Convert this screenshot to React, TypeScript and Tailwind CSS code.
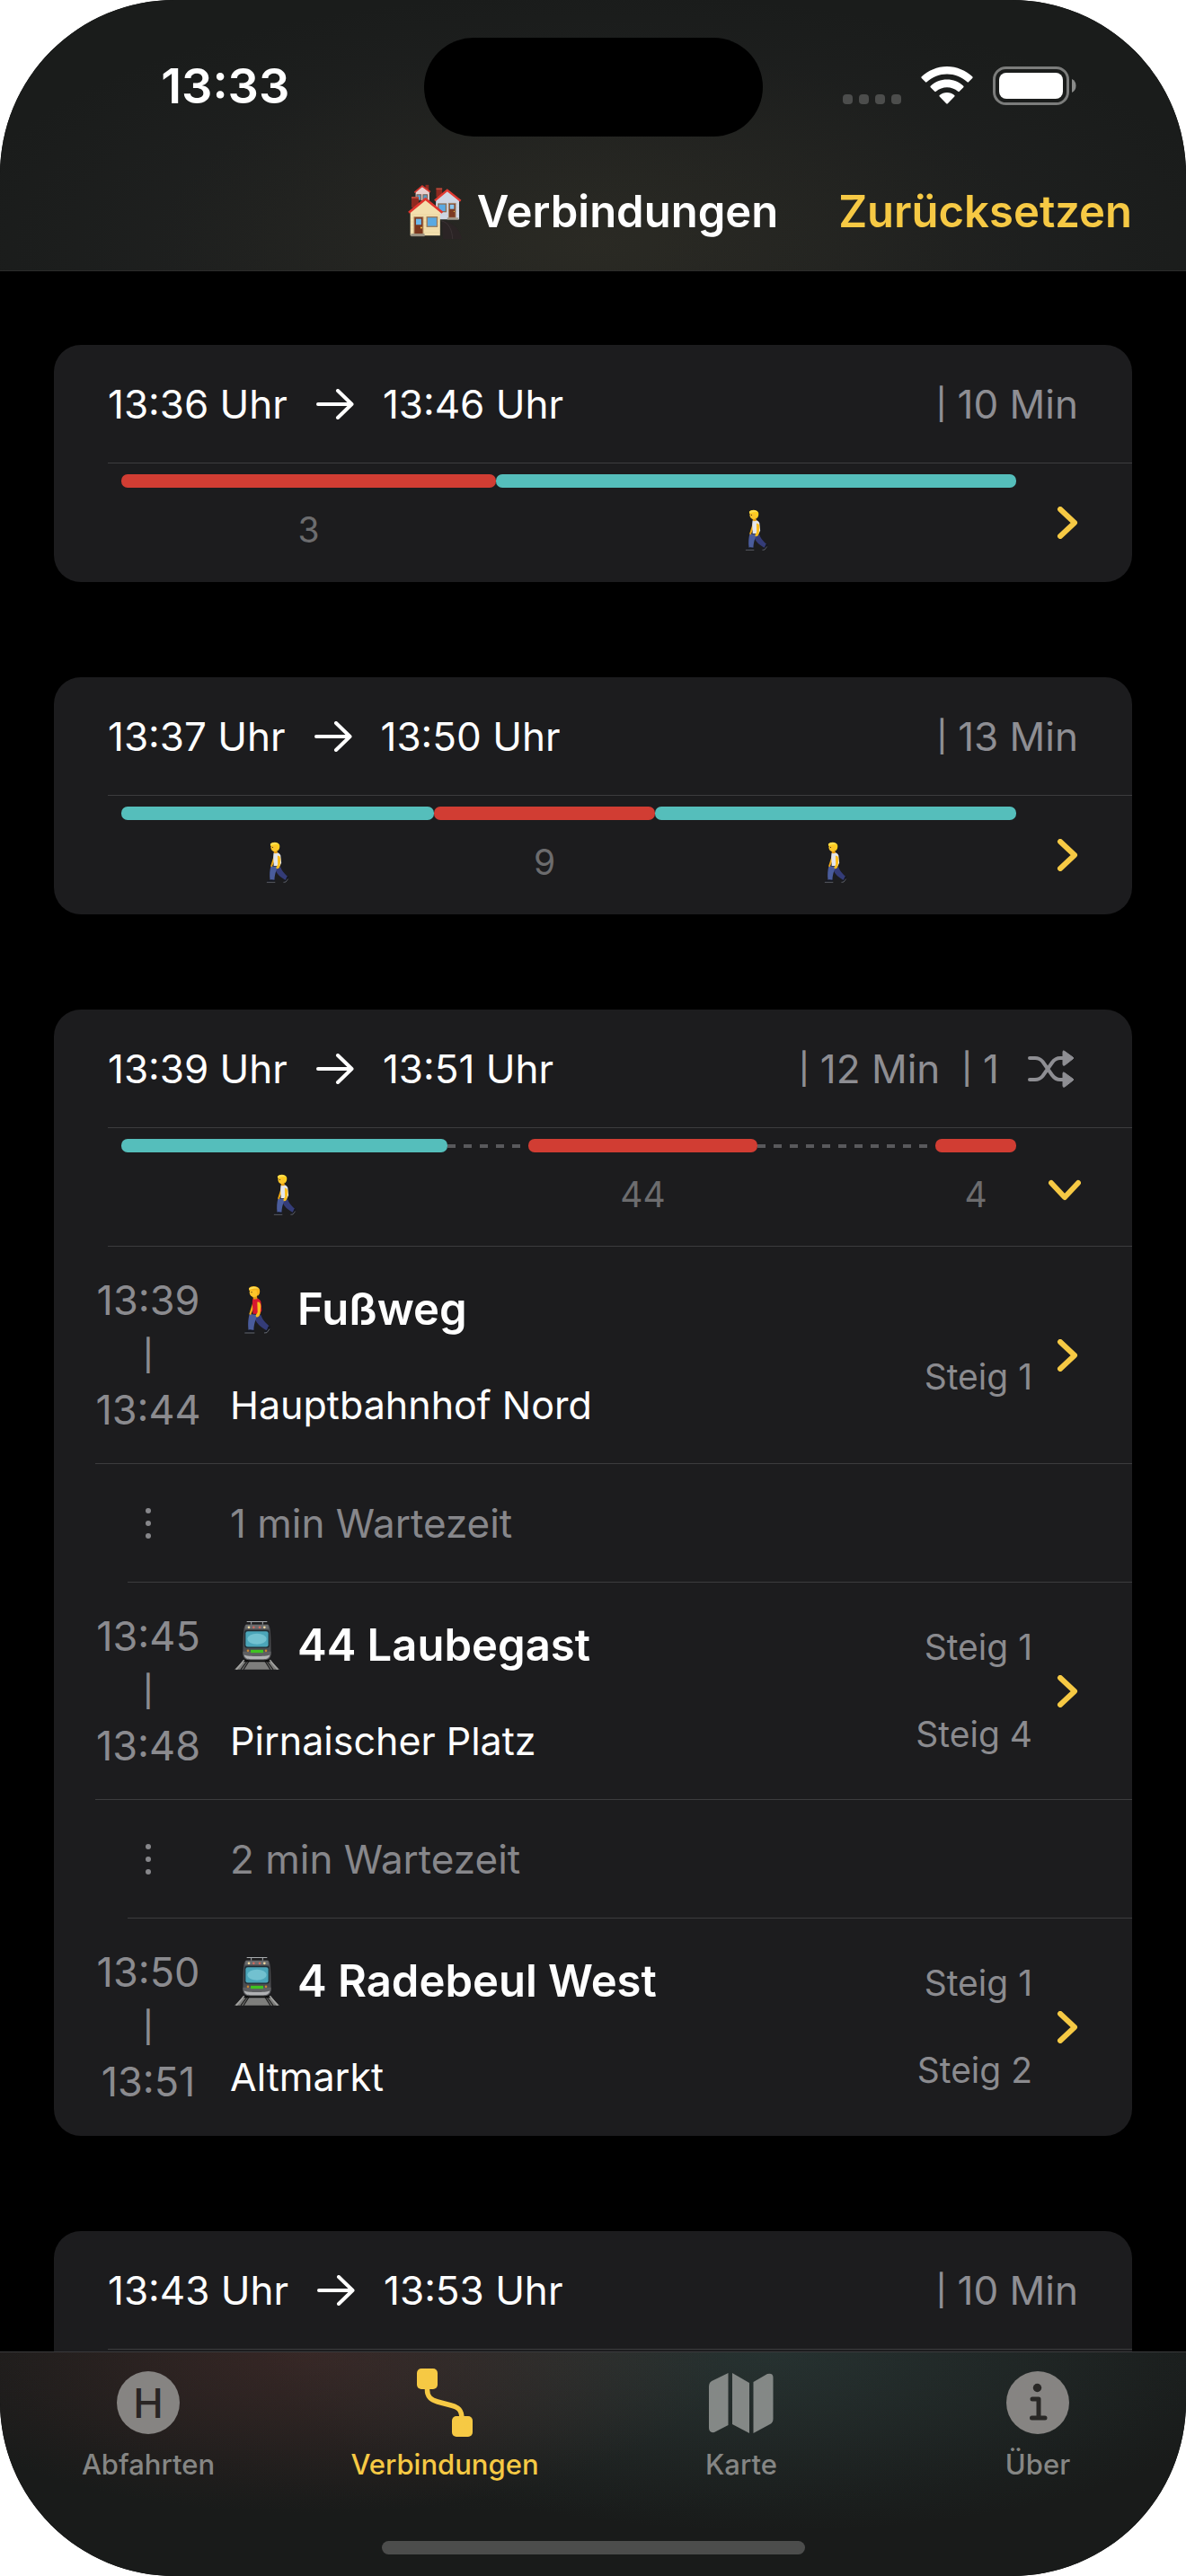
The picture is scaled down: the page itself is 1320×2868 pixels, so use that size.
import type { ReactNode } from "react";

type Segment = { kind: "ride" | "walk" | "wait"; minutes: number; label?: string };

type Leg = {
  kind: "walk" | "tram";
  start: string;
  end: string;
  title: string;
  stop: string;
  platforms: [string, string];
  waitAfter?: string;
};

type Connection = {
  start: string;
  end: string;
  duration: string;
  changes?: number;
  segments: Segment[];
  legs?: Leg[];
};

const connections: Connection[] = [
  {
    start: "13:36",
    end: "13:46",
    duration: "10 Min",
    segments: [
      { kind: "ride", minutes: 417, label: "3" },
      { kind: "walk", minutes: 579 },
    ],
  },
  {
    start: "13:37",
    end: "13:50",
    duration: "13 Min",
    segments: [
      { kind: "walk", minutes: 348 },
      { kind: "ride", minutes: 246, label: "9" },
      { kind: "walk", minutes: 402 },
    ],
  },
  {
    start: "13:39",
    end: "13:51",
    duration: "12 Min",
    changes: 1,
    segments: [
      { kind: "walk", minutes: 363 },
      { kind: "wait", minutes: 90 },
      { kind: "ride", minutes: 255, label: "44" },
      { kind: "wait", minutes: 198 },
      { kind: "ride", minutes: 90, label: "4" },
    ],
    legs: [
      {
        kind: "walk",
        start: "13:39",
        end: "13:44",
        title: "Fußweg",
        stop: "Hauptbahnhof Nord",
        platforms: ["", "Steig 1"],
        waitAfter: "1 min Wartezeit",
      },
      {
        kind: "tram",
        start: "13:45",
        end: "13:48",
        title: "44 Laubegast",
        stop: "Pirnaischer Platz",
        platforms: ["Steig 1", "Steig 4"],
        waitAfter: "2 min Wartezeit",
      },
      {
        kind: "tram",
        start: "13:50",
        end: "13:51",
        title: "4 Radebeul West",
        stop: "Altmarkt",
        platforms: ["Steig 1", "Steig 2"],
      },
    ],
  },
  {
    start: "13:43",
    end: "13:53",
    duration: "10 Min",
    segments: [],
  },
];

function HousesIcon() {
  return (
    <svg viewBox="50 44 184 186" className="h-[62px] w-[61px] shrink-0" aria-hidden="true">
      <path d="M164 166 C198 170 226 196 231 228 L168 228 Z" fill="#2b2425" />
      <path d="M160 166 C190 172 198 200 200 228" fill="none" stroke="#4a4344" strokeWidth="1.5" />
      <rect x="109" y="46" width="11" height="20" fill="#8e2a20" />
      <path d="M76 70 L98 52 L122 70 L122 98 L76 98 Z" fill="#e9cfcd" />
      <rect x="80" y="79" width="14" height="18" fill="#5d9cc4" stroke="#7b5c4c" strokeWidth="3" />
      <rect x="101" y="79" width="14" height="18" fill="#5d9cc4" stroke="#7b5c4c" strokeWidth="3" />
      <path d="M72 72 L98 50 L125 70" fill="none" stroke="#d8352d" strokeWidth="5" />
      <rect x="145" y="57" width="20" height="30" fill="#8e2a20" />
      <rect x="145" y="57" width="20" height="5" fill="#b84b3c" />
      <path d="M144 98 L182 64 L222 98 L222 162 L144 162 Z" fill="#cfd6e4" />
      <path d="M150 110 H222 M150 122 H222 M150 134 H222 M150 146 H222" stroke="#bcc5d6" strokeWidth="1" />
      <rect x="152" y="110" width="26" height="26" fill="#5aa9e2" stroke="#8b6f55" strokeWidth="4" />
      <rect x="187" y="108" width="23" height="48" fill="#7c3a22" stroke="#a58566" strokeWidth="3" />
      <rect x="191" y="112" width="14" height="15" fill="#8cc8f0" />
      <circle cx="205" cy="135" r="2" fill="#f0c040" />
      <rect x="182" y="156" width="38" height="7" fill="#a29b8c" />
      <path d="M140 99 L182 64 L227 100" fill="none" stroke="#e23a32" strokeWidth="7" />
      <rect x="62" y="86" width="24" height="36" fill="#8e2a20" />
      <rect x="62" y="86" width="24" height="5" fill="#c2503f" />
      <path d="M58 136 L110 94 L158 136 L158 216 L58 216 Z" fill="#f3dfae" />
      <path d="M60 146 H158 M60 158 H158 M60 170 H158 M60 182 H158 M60 194 H158 M60 206 H158" stroke="#e4cc95" strokeWidth="1.5" />
      <rect x="71" y="154" width="30" height="57" fill="#7a351d" stroke="#b08a62" strokeWidth="3" />
      <rect x="77" y="160" width="18" height="20" fill="#6db7ea" />
      <circle cx="95" cy="190" r="3" fill="#f4c542" />
      <rect x="114" y="154" width="34" height="32" fill="#5aa9e2" stroke="#9c7a58" strokeWidth="4" />
      <rect x="60" y="210" width="46" height="9" fill="#9b9384" />
      <path d="M53 139 L109 93 L166 139" fill="none" stroke="#e0352d" strokeWidth="8" />
    </svg>
  );
}

function Walker({ shirt, className }: { shirt: "red" | "white"; className: string }) {
  const red = shirt === "red";
  return (
    <svg viewBox="94 94 91 162" className={className} aria-hidden="true">
      <path d="M133 194 L152 194 C154 205 160 212 180 232 L170 245 C150 232 136 222 132 206 Z" fill="#343c78" />
      <path d="M113 190 L137 192 C138 206 128 214 127 246 L110 246 C107 222 109 206 113 190 Z" fill="#4a5c9c" />
      <path d="M97 251 C100 245 108 245 114 242 L129 244 L129 254 L97 254 Z" fill="#15171f" />
      <path d="M162 250 C170 246 174 240 175 232 L182 229 C184 236 180 246 170 253 L162 254 Z" fill="#15171f" />
      <path d="M97 253 H130 M162 253 L171 252 L180 240" fill="none" stroke="#8f949c" strokeWidth="2" />
      <path d="M124 152 L112 190 L117 194 L130 164 Z" fill="#f0a915" />
      <path d="M124 138 C134 133 146 138 151 148 L154 178 L148 190 L124 189 C126 172 120 156 124 138 Z" fill={red ? "#d8172f" : "#e4e6ec"} />
      <path d="M139 150 C146 148 151 154 151 164 L149 186 C148 196 142 202 135 200 L134 194 L140 184 Z" fill="#fbbe1e" />
      <path d="M122 128 L138 128 L139 140 L127 141 Z" fill="#e59c10" />
      <ellipse cx="128" cy="117" rx="15" ry="16" fill="#fcc62a" />
      <path d="M111 104 C118 94 142 94 147 108 C149 118 146 126 140 130 C138 122 138 116 136 110 C128 112 118 110 112 112 Z" fill={red ? "#f6b51c" : "#ffce1f"} />
      <path d="M112 104 C120 97 138 97 144 106 C134 103 122 106 112 109 Z" fill="#ffdf55" />
      <circle cx="120" cy="117" r="2" fill="#5b3710" />
    </svg>
  );
}

function TramIcon() {
  return (
    <svg viewBox="34 28 150 164" className="h-[55px] w-[50px] shrink-0" aria-hidden="true">
      <path d="M66 160 H152 L184 192 H34 Z" fill="#7e7e7c" />
      <path d="M66 160 L40 192 M152 160 L178 192" stroke="#a2a2a0" strokeWidth="5" />
      <path d="M77 162 L55 192 M83 162 L64 192 M141 162 L163 192 M135 162 L154 192" stroke="#232323" strokeWidth="4" />
      <path d="M70 158 H148 L154 166 H64 Z" fill="#0d0d0d" />
      <path d="M75 32 H143 M90 32 V42 M128 32 V42" stroke="#a9adb0" strokeWidth="3" fill="none" />
      <path d="M72 42 H146 C152 44 154 60 155 90 L156 136 C156 152 148 160 132 160 H86 C70 160 62 152 62 136 L63 90 C64 60 66 44 72 42 Z" fill="#4b4c50" />
      <path d="M72 42 H146 L149 56 H69 Z" fill="#696b6e" />
      <path d="M62 132 H156 C156 152 148 160 132 160 H86 C70 160 62 152 62 132 Z" fill="#5e5f62" />
      <path d="M66 143 C80 149 138 149 152 143 C149 154 142 157 130 157 H88 C76 157 69 154 66 143 Z" fill="#b1b2b4" />
      <rect x="67" y="60" width="84" height="60" rx="9" fill="#202c33" />
      <rect x="71" y="64" width="76" height="52" rx="7" fill="#4ba5b9" />
      <ellipse cx="109" cy="90" rx="32" ry="18" fill="#7cc8d6" opacity="0.8" />
      <rect x="88" y="126" width="42" height="10" fill="#3fc321" />
      <circle cx="82" cy="51" r="4" fill="#f0d9a0" />
      <circle cx="98" cy="51" r="4" fill="#cf6a5c" />
      <circle cx="118" cy="51" r="4" fill="#cf6a5c" />
      <circle cx="134" cy="51" r="4" fill="#f0d9a0" />
      <circle cx="79" cy="129" r="4" fill="#c98733" />
      <circle cx="139" cy="129" r="4" fill="#c98733" />
    </svg>
  );
}

function ArrowIcon() {
  return (
    <svg viewBox="0 0 42 34" className="h-[34px] w-[42px] shrink-0" fill="none" stroke="currentColor" strokeWidth="4" strokeLinecap="round" strokeLinejoin="round" aria-label="bis">
      <path d="M2 17 H39 M24 2 L39.500 17 L24 32" />
    </svg>
  );
}

function ShuffleIcon() {
  return (
    <svg viewBox="0 0 52 42" className="mr-1 h-[42px] w-[52px] shrink-0" aria-label="Umstiege">
      <path d="M2 9 H8 C12 9 14 10 16.500 13 L27 28 C29.500 31.500 32 33 36 33 H40 M2 33 H8 C12 33 14 32 16.500 29 L27 14 C29.500 10.500 32 9 36 9 H40" fill="none" stroke="currentColor" strokeWidth="4" strokeLinecap="round" />
      <path d="M39 2 Q39 0 41 1.500 L50 8 Q51.500 9 50 10 L41 17 Q39 18 39 16 Z M39 26 Q39 24 41 25.500 L50 32 Q51.500 33 50 34 L41 41 Q39 42 39 40 Z" fill="currentColor" stroke="currentColor" strokeWidth="1" />
    </svg>
  );
}

function Chevron({ down = false }: { down?: boolean }) {
  return (
    <svg viewBox="0 0 36 36" className="size-9" fill="none" stroke="currentColor" strokeWidth="6" strokeLinecap="round" strokeLinejoin="round" aria-hidden="true">
      {down ? <path d="M3 13 L18 29 L33 13" /> : <path d="M13 3 L29 18 L13 33" />}
    </svg>
  );
}

function StatusBar() {
  return (
    <div className="grid h-[170px] grid-cols-[1fr_377px_1fr] items-start pt-[42px] text-white">
      <div className="pl-[30px] text-center text-[54px] leading-[108px] font-semibold">13:33</div>
      <div className="h-[110px] rounded-full bg-black" />
      <div className="flex h-[106px] items-center justify-end gap-[22px] pr-[122px]">
        <div className="flex gap-[7px] pt-[30px]">
          {[0, 1, 2, 3].map((dot) => (
            <span key={dot} className="size-[11px] rounded-[4px] bg-[#4c4d4c]" />
          ))}
        </div>
        <svg viewBox="0 0 58 42" className="h-[42px] w-[58px]" fill="white" aria-label="WLAN">
          <path d="M29 0 C40 0 50 4.500 57.500 11.500 Q58 12.300 57.300 13 L53 17.300 Q52.300 18 51.500 17.300 C45 11.500 37.500 8.600 29 8.600 C20.500 8.600 13 11.500 6.500 17.300 Q5.700 18 5 17.300 L0.700 13 Q0 12.300 0.500 11.500 C8 4.500 18 0 29 0 Z" />
          <path d="M29 14.500 C36 14.500 42 17 47.300 21.700 Q48 22.500 47.300 23.200 L42.800 27.800 Q42 28.500 41.200 27.800 C37.600 24.800 33.500 23.200 29 23.200 C24.500 23.200 20.400 24.800 16.800 27.800 Q16 28.500 15.200 27.800 L10.700 23.200 Q10 22.500 10.700 21.700 C16 17 22 14.500 29 14.500 Z" />
          <path d="M29 29 C32 29 35 30 37.300 32 Q38 32.800 37.300 33.500 L29.800 41.300 Q29 42 28.200 41.300 L20.700 33.500 Q20 32.800 20.700 32 C23 30 26 29 29 29 Z" />
        </svg>
        <svg viewBox="0 0 93 43" className="h-[43px] w-[93px]" aria-label="Akku">
          <rect x="1.500" y="1.500" width="82" height="40" rx="13" fill="none" stroke="#7b7c7b" strokeWidth="3" />
          <rect x="7" y="7" width="71" height="29" rx="8" fill="white" />
          <path d="M88 14 C94 16 94 27 88 29 Z" fill="#8a8b8a" />
        </svg>
      </div>
    </div>
  );
}

function Header() {
  return (
    <header className="border-b border-[#2c2c2b] bg-[#1a1c1b] bg-[radial-gradient(ellipse_480px_220px_at_50%_90%,rgba(60,56,32,0.24),transparent),radial-gradient(ellipse_720px_280px_at_50%_90%,rgba(60,58,58,0.32),transparent)]">
      <StatusBar />
      <div className="grid h-[131px] grid-cols-[1fr_auto_1fr] items-center px-[60px]">
        <h1 className="col-start-2 flex items-center gap-4 text-[49px] leading-[60px] font-semibold text-white">
          <HousesIcon />
          Verbindungen
        </h1>
        <button type="button" className="justify-self-end text-[49px] leading-[60px] font-semibold text-[#f6c944]">
          Zurücksetzen
        </button>
      </div>
    </header>
  );
}

function SegmentView({ segment }: { segment: Segment }) {
  return (
    <div className="flex min-w-0 basis-0 flex-col" style={{ flexGrow: segment.minutes }}>
      {segment.kind === "wait" ? (
        <div className="flex h-[15px] items-center">
          <div className="h-1 w-full bg-[repeating-linear-gradient(90deg,#59595c_0_9px,transparent_9px_18px)]" />
        </div>
      ) : (
        <>
          <div className={segment.kind === "ride" ? "h-[15px] rounded-[7px] bg-[#d13d33]" : "h-[15px] rounded-[7px] bg-[#55bebb]"} />
          <div className="flex h-[93px] items-center justify-center text-[39px] leading-[48px] text-[#6c6c6e]">
            {segment.kind === "ride" ? segment.label : <Walker shirt="white" className="h-[48px] w-[26px]" />}
          </div>
        </>
      )}
    </div>
  );
}

function Divider({ className }: { className: string }) {
  return <div className={`h-px bg-[#3c3c3e] ${className}`} />;
}

function LegView({ leg }: { leg: Leg }) {
  return (
    <div className="flex h-[241px] items-center pl-[46px] pr-[57px]">
      <div className="flex w-[118px] flex-col text-center text-[45px] leading-[61px] text-[#8b8b8f]">
        <span>{leg.start}</span>
        <span className="text-[34px] font-medium">|</span>
        <span>{leg.end}</span>
      </div>
      <div className="flex flex-1 flex-col gap-[46px] pt-1 pl-8 text-white">
        <h2 className="flex items-center text-[49px] leading-[60px] font-semibold">
          <span className="flex w-[75px] items-center pl-[5px]">
            {leg.kind === "walk" ? <Walker shirt="red" className="ml-[10px] h-[54px] w-[31px]" /> : <TramIcon />}
          </span>
          {leg.title}
        </h2>
        <p className="text-[43px] leading-[60px]">{leg.stop}</p>
      </div>
      <div className="flex flex-col items-end gap-[49px] text-[39px] leading-[48px] text-[#8b8b8f]">
        {leg.platforms.map((platform, index) => (
          <span key={index}>{platform}</span>
        ))}
      </div>
      <button type="button" aria-label={`Details ${leg.title}`} className="ml-[18px] text-[#f6c944]">
        <Chevron />
      </button>
    </div>
  );
}

function Fact({ children }: { children: ReactNode }) {
  return (
    <span className="flex items-center gap-3">
      <span className="text-[34px] font-medium">|</span>
      <span>{children}</span>
    </span>
  );
}

function ConnectionCard({ connection }: { connection: Connection }) {
  const open = Boolean(connection.legs);
  return (
    <article className="shrink-0 overflow-hidden rounded-[30px] bg-[#1c1c1e] pb-px">
      <div className="flex h-[131px] items-center justify-between px-[60px] text-[44px] leading-[60px]">
        <div className="flex items-center gap-8 text-white">
          <span>{connection.start} Uhr</span>
          <ArrowIcon />
          <span>{connection.end} Uhr</span>
        </div>
        <div className="flex items-center gap-6 text-[#8e8e93]">
          <Fact>{connection.duration}</Fact>
          {connection.changes && (
            <div className="flex items-center gap-8">
              <Fact>{connection.changes}</Fact>
              <ShuffleIcon />
            </div>
          )}
        </div>
      </div>
      <Divider className="ml-[60px]" />
      <div className="flex h-[131px] pr-[57px] pl-[75px]">
        <div className="flex flex-1 pt-3">
          {connection.segments.map((segment, index) => (
            <SegmentView key={index} segment={segment} />
          ))}
        </div>
        <button type="button" aria-expanded={open} aria-label="Verbindung anzeigen" className="ml-9 text-[#f6c944]">
          <Chevron down={open} />
        </button>
      </div>
      {connection.legs?.map((leg) => (
        <div key={leg.start}>
          {leg === connection.legs?.[0] && <Divider className="ml-[60px]" />}
          <LegView leg={leg} />
          {leg.waitAfter && (
            <>
              <Divider className="ml-[46px]" />
              <div className="flex h-[131px] items-center pl-[46px] text-[44px] leading-[60px] text-[#87878b]">
                <div className="flex w-[118px] flex-col items-center gap-2">
                  <span className="size-[6px] rounded-full bg-current" />
                  <span className="size-[6px] rounded-full bg-current" />
                  <span className="size-[6px] rounded-full bg-current" />
                </div>
                <span className="pl-8">{leg.waitAfter}</span>
              </div>
              <Divider className="ml-[82px]" />
            </>
          )}
        </div>
      ))}
    </article>
  );
}

function Tab({ label, active = false, children }: { label: string; active?: boolean; children: ReactNode }) {
  return (
    <a
      href="#"
      aria-current={active ? "page" : undefined}
      className={`flex flex-1 flex-col items-center gap-[13px] text-[31px] leading-[36px] font-medium ${active ? "text-[#f6c944]" : "text-[#858684]"}`}
    >
      <span className="flex h-[76px] items-center justify-center">{children}</span>
      {label}
    </a>
  );
}

function TabBar() {
  return (
    <footer className="h-[250px] shrink-0 border-t border-[#3a3a3c] bg-[#191b1a] bg-[radial-gradient(ellipse_460px_180px_at_26%_0%,rgba(120,60,58,0.28),transparent),radial-gradient(ellipse_560px_200px_at_65%_0%,rgba(60,105,105,0.24),transparent),radial-gradient(ellipse_700px_180px_at_50%_0%,rgba(60,56,52,0.25),transparent)]">
      <nav className="flex pt-[18px]">
        <Tab label="Abfahrten">
          <span className="flex size-[70px] items-center justify-center rounded-full bg-[#868482] text-[45px] leading-[45px] font-medium text-[#292524]">H</span>
        </Tab>
        <Tab label="Verbindungen" active>
          <svg viewBox="0 0 62 76" className="h-[76px] w-[62px]" fill="currentColor" aria-hidden="true">
            <rect x="0" y="0" width="23" height="23" rx="5" />
            <rect x="39" y="53" width="23" height="23" rx="5" />
            <path d="M11.500 20 V24 C11.500 32 16 35 23 37 L38 41 C46 43 50 46 50 56" fill="none" stroke="currentColor" strokeWidth="5.500" />
          </svg>
        </Tab>
        <Tab label="Karte">
          <svg viewBox="0 0 72 68" className="h-[68px] w-[72px]" fill="#848886" aria-hidden="true">
            <path d="M21.500 1 V59 L6 67 Q0 68 0 62 V16 Q0 12 3 10 Z" />
            <path d="M26 1 L45 12 V68 L26 58 Z" />
            <path d="M49.500 11 L65 2 Q71.500 0.500 71.500 6 V52 Q71.500 56 68 58 L49.500 68 Z" />
          </svg>
        </Tab>
        <Tab label="Über">
          <svg viewBox="0 0 70 70" className="size-[70px]" aria-hidden="true">
            <circle cx="35" cy="35" r="35" fill="#868482" />
            <circle cx="34.500" cy="18.500" r="4.700" fill="#292826" />
            <path d="M29 31 H36 V52 M28.500 52 H43" fill="none" stroke="#292826" strokeWidth="5" strokeLinecap="round" strokeLinejoin="round" />
          </svg>
        </Tab>
      </nav>
      <div className="mx-auto mt-[67px] h-[15px] w-[471px] rounded-full bg-[#4c4d4c]" />
    </footer>
  );
}

export default function App() {
  return (
    <div className="bg-white">
      <div className="flex h-screen flex-col overflow-hidden rounded-[194px] bg-black font-['Inter',sans-serif]">
        <Header />
        <main className="flex min-h-0 flex-1 flex-col gap-[106px] overflow-hidden px-[60px] pt-[82px]">
          {connections.map((connection) => (
            <ConnectionCard key={connection.start} connection={connection} />
          ))}
        </main>
        <TabBar />
      </div>
    </div>
  );
}
